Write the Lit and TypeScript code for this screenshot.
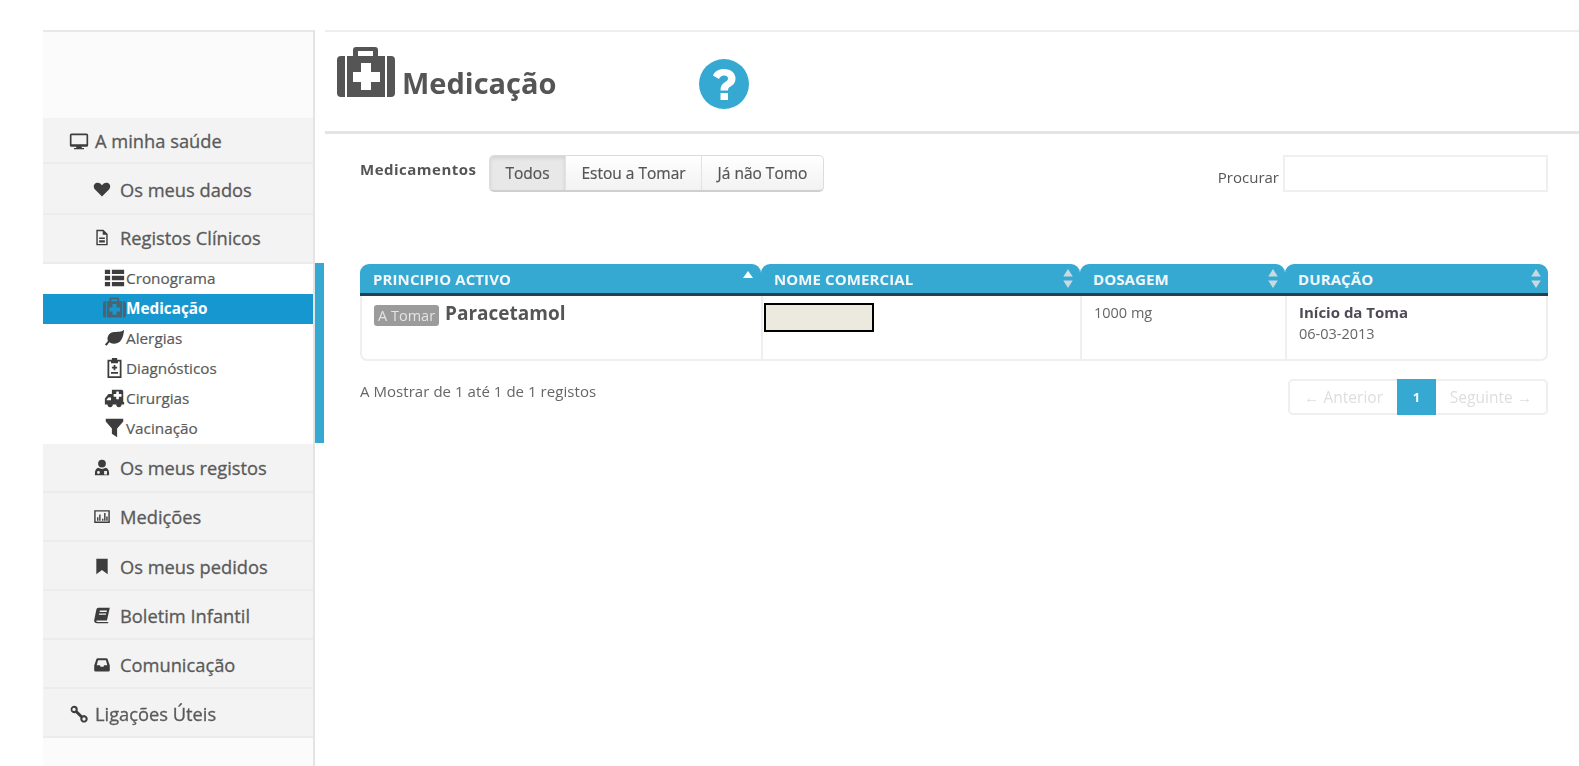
import { LitElement, html, css, svg } from "lit";
import { customElement } from "lit/decorators.js";

const ic = (body: unknown, vb = "0 0 24 24") =>
  html`<svg class="svg" viewBox=${vb} fill="currentColor" aria-hidden="true">${body}</svg>`;

const medPath = svg`<path fill-rule="evenodd" d="M16 9V3a3 3 0 0 1 3-3h19a3 3 0 0 1 3 3v6h7v41H10V9Zm5 0h15V4H21Zm3 7v9h-8v10h8v8h10v-8h9V25h-9v-9ZM4 9h4v41H4a4 4 0 0 1-4-4V13a4 4 0 0 1 4-4Zm46 0h4a4 4 0 0 1 4 4v33a4 4 0 0 1-4 4h-4Z"/>`;

const heart = svg`<path d="M12 22 2.500 12.500C-.5 9-.2 4.500 3 3c3-1.300 6.500-.5 9 3 2.500-3.500 6-4.300 9-3 3.200 1.500 3.500 6 .5 9.500Z"/>`;

const icons: Record<string, unknown> = {
  monitor: ic(svg`<path fill-rule="evenodd" d="M3 3h18a2 2 0 0 1 2 2v12a2 2 0 0 1-2 2h-6l.5 1.500H18V22H6v-1.500h2.500l.5-1.500H3a2 2 0 0 1-2-2V5a2 2 0 0 1 2-2Zm0 2v11h18V5Z"/>`),
  heart: ic(heart),
  file: ic(svg`<path fill-rule="evenodd" d="M4 1h10l6 6v16H4Zm2 2v18h12V8h-5V3Zm2 9h8v2H8Zm0 4h8v3H8Z"/>`),
  list: ic(svg`<path d="M1 3h6v5H1Zm8 0h14v5H9ZM1 10h6v5H1Zm8 0h14v5H9ZM1 17h6v5H1Zm8 0h14v5H9Z"/>`),
  med: ic(medPath, "0 0 58 50"),
  leaf: ic(svg`<path d="M23 3C22 13 19 19 11 19c-2 0-3.500-.5-5-1.500L3 21.500 1 20l3.500-4C3 12 5 7 10 6c5-1 10 0 13-3Z"/>`),
  clip: ic(svg`<path fill-rule="evenodd" d="M9 3V1h6v2h5v21H4V3Zm-3 2v17h12V5h-2v2H8V5Zm5 4h2v2h2v2h-2v2h-2v-2H9v-2h2Zm-3 8h8v2H8Z"/>`),
  amb: ic(svg`<path fill-rule="evenodd" d="M9 3h11a2 2 0 0 1 2 2v12h1v3h-3a3 3 0 0 1-6 0h-4a3 3 0 0 1-6 0H1v-7l4-5h4Zm5 2v3h-3v3h3v3h3v-3h3V8h-3V5Zm-9 7-2 2.500V15h5v-3Z"/>`),
  filter: ic(svg`<path d="M2 2h20v3l-7 8v10l-6-4v-6L2 5Z"/>`),
  user: ic(svg`<path fill-rule="evenodd" d="M12 1a5.500 5.500 0 0 1 0 11 5.500 5.500 0 0 1 0-11ZM7 12.500c1.500 1 3 1.500 5 1.500s3.500-.5 5-1.500c3 .5 5 3.500 5 7.500v3H2v-3c0-4 2-7 5-7.500ZM5 19a2 2 0 1 0 4 0 2 2 0 1 0-4 0Zm10-2v5h4v-5Z"/>`),
  chart: ic(svg`<path fill-rule="evenodd" d="M1 3h22v18H1Zm2 2v14h18V5Zm2 8h2v5H5Zm3-4h2v9H8Zm4 6h2v3h-2Zm3-8h2v11h-2Zm3 5h2v6h-2Z"/>`),
  bookmark: ic(svg`<path d="M4 1h16v22l-8-6-8 6Z"/>`),
  book: ic(svg`<path fill-rule="evenodd" d="M7 1h16l-4 18H5c-1 0-1.500 1-1 1.500S5 21 6 21h15l-.5 2H5c-3 0-4.500-2-4-4.500L4 4c.3-1.800 1.500-3 3-3Zm2 4-.5 2h10l.5-2Zm-1 4-.5 2h10l.5-2Z"/>`),
  inbox: ic(svg`<path fill-rule="evenodd" d="M6 3h12c1 0 1.700.5 2 1.500l3 9V20a2 2 0 0 1-2 2H3a2 2 0 0 1-2-2v-6.500l3-9C4.300 3.500 5 3 6 3Zm.5 3-2 7H9l1 2h4l1-2h4.500l-2-7Z"/>`),
  link: ic(svg`<path fill-rule="evenodd" d="M6 2a4.500 4.500 0 0 1 4.500 4.500c0 .5-.1 1-.3 1.500l5.800 5.800A4.500 4.500 0 1 1 13.500 18c0-.5.100-1 .3-1.500L8 10.700A4.500 4.500 0 1 1 6 2Zm0 2.500a2 2 0 1 0 0 4 2 2 0 0 0 0-4Zm12 11.500a2 2 0 1 0 0 4 2 2 0 0 0 0-4Z"/>`),
};

const subs = [
  ["list", "Cronograma"],
  ["med", "Medicação"],
  ["leaf", "Alergias"],
  ["clip", "Diagnósticos"],
  ["amb", "Cirurgias"],
  ["filter", "Vacinação"],
];

const sort = html`<svg class="sort" viewBox="0 0 10 20" fill="currentColor" aria-hidden="true"><path d="M5 0l5 8H0ZM5 20l5-8H0Z"/></svg>`;

@customElement("app-root")
export class AppRoot extends LitElement {
  static styles = css`
    :host {
      display: block;
      height: 766px;
      overflow: hidden;
      background: #fff;
      font-family: "Open Sans", "Noto Sans", sans-serif;
      color: #555;
    }
    * { box-sizing: border-box; }
    .page {
      display: flex;
      height: 766px;
      padding: 30px 0 0 43px;
      filter: blur(0.5px);
    }
    .side {
      width: 270px;
      flex: none;
      border-top: 2px solid #e8e8e8;
      background: #fbfbfb;
    }
    .brand { height: 86px; }
    .row {
      display: flex;
      align-items: center;
      gap: 8px;
      height: 49px;
      padding: 0 0 0 49px;
      background: #f3f3f3;
      border-bottom: 2px solid #ececec;
      font-size: 18.300px;
      color: #5a5a5a;
      -webkit-text-stroke: 0.3px #5a5a5a;
    }
    .row.top { padding-left: 25px; gap: 5px; }
    .row.first { height: 46px; padding-top: 1px; }
    .row.tall { height: 51px; padding-top: 1px; }
    .row.lift { padding-bottom: 2px; }
    .row.drop { padding-top: 2px; }
    .row .svg { width: 22px; height: 20px; color: #3d3d3d; flex: none; }
    .row.small .svg { width: 20px; height: 17px; }
    .sub { background: #fff; }
    .item {
      display: flex;
      align-items: center;
      height: 30px;
      padding: 0 0 3px 60px;
      font-size: 15.300px;
      color: #5a5a5a;
      -webkit-text-stroke: 0.2px #5a5a5a;
    }
    .item .svg { width: 23px; height: 21px; flex: none; color: #3d3d3d; }
    .item.on { background: #1797d0; color: #fff; font-weight: 700; -webkit-text-stroke: 0; }
    .item.on .svg { color: #4a6472; }
    .track {
      width: 12px;
      flex: none;
      padding-top: 233px;
      border-left: 2px solid #e4e4e4;
    }
    .thumb { width: 9px; height: 180px; background: #36a9d3; }
    .main { flex: 1; border-top: 2px solid #eee; min-width: 0; }
    .head {
      display: flex;
      align-items: center;
      height: 102px;
      padding-left: 12px;
      border-bottom: 3px solid #e4e4e4;
    }
    .title-ic { width: 58px; height: 50px; color: #555; margin-top: -20px; flex: none; }
    .head h1 {
      margin: 1px 0 0 7px;
      width: 297px;
      font-size: 29px;
      font-weight: 700;
      color: #555;
    }
    .help { width: 50px; height: 50px; flex: none; margin-top: 4px; }
    .body { padding: 21px 31px 0 35px; }
    .tools { display: flex; align-items: flex-start; }
    .lbl { width: 129px; font-size: 15px; letter-spacing: .5px; font-weight: 700; line-height: 28px; color: #555; }
    .group {
      display: flex;
      height: 37px;
      border: 1px solid #dcdcdc;
      border-bottom: 2px solid #cfcfcf;
      border-radius: 5px;
      overflow: hidden;
      background: linear-gradient(#fff, #f2f2f2);
      font-size: 15.500px;
      -webkit-text-stroke: 0.2px #555;
    }
    .group div {
      display: flex;
      align-items: center;
      justify-content: center;
      border-left: 1px solid #e2e2e2;
    }
    .group .b1 { width: 75px; background: #e8e8e8; border-left: 0; box-shadow: inset 0 2px 4px rgba(0,0,0,.1); }
    .group .b2 { width: 136px; }
    .group .b3 { width: 122px; }
    .search { margin-left: auto; display: flex; align-items: flex-start; gap: 4px; }
    .search label { font-size: 15px; margin-top: 12px; }
    .input { width: 265px; height: 37px; border: 2px solid #efefef; background: #fff; }
    .table { margin-top: 72px; }
    .thead { display: grid; grid-template-columns: 401px 319px 205px 263px; }
    .tbody { display: grid; grid-template-columns: 399px 319px 205px 1fr; }
    .th {
      display: flex;
      align-items: center;
      justify-content: space-between;
      height: 32px;
      padding: 0 7px 0 13px;
      background: #36a9d3;
      border-bottom: 3px solid #27404c;
      border-radius: 9px 9px 0 0;
      color: #f1f7fa;
      font-size: 15px;
      font-weight: 700;
      letter-spacing: .1px;
    }
    .sort { width: 10px; height: 19px; color: #c9d9df; flex: none; }
    .tri { width: 0; height: 0; border: 5px solid transparent; border-top: 0; border-bottom: 7px solid #fff; margin: -9px 1px 0 0; }
    .tbody {
      height: 65px;
      border: 2px solid #efefef;
      border-top: 0;
      border-radius: 0 0 7px 7px;
      font-size: 14.500px;
      color: #666;
    }
    .td { padding: 7px 12px 0; border-left: 2px solid #efefef; }
    .td:first-child { border-left: 0; padding-top: 5px; }
    .td.d { padding-top: 6px; }
    .drug { display: flex; align-items: flex-start; gap: 6px; }
    .badge {
      display: block;
      margin-top: 4px;
      padding: 0 4px;
      height: 21px;
      line-height: 21px;
      border-radius: 3px;
      background: #9b9b9b;
      color: #e4e4e4;
      font-size: 14.500px;
    }
    .name { font-size: 19px; font-weight: 700; color: #555; line-height: 24px; }
    .hidden { width: 110px; height: 29px; margin: 7px 0 0 -11px; background: #ece9df; border: 2px solid #000; }
    .td.n { padding-top: 0; }
    .strong { font-weight: 700; font-size: 15px; color: #4f4a55; line-height: 20px; }
    .date { margin-top: 2px; line-height: 20px; }
    .foot { display: flex; justify-content: space-between; margin-top: 18px; }
    .info { font-size: 15px; letter-spacing: .05px; color: #666; line-height: 22px; margin-top: 1px; }
    .pager {
      display: flex;
      height: 36px;
      border: 2px solid #efefef;
      border-radius: 5px;
      font-size: 15.500px;
      color: #dedede;
    }
    .pager div { display: flex; align-items: center; justify-content: center; }
    .pager .p { width: 107px; }
    .pager .c { width: 39px; margin: -2px 0; background: #36a9d3; color: #f2f8fb; font-size: 13px; font-weight: 700; }
    .pager .n { width: 110px; }
  `;

  render() {
    const row = (i: string, t: string, cls = "") =>
      html`<div class="row ${cls}">${icons[i]}<span>${t}</span></div>`;
    return html`<div class="page">
      <nav class="side">
        <div class="brand"></div>
        ${row("monitor", "A minha saúde", "top first")}
        ${row("heart", "Os meus dados", "tall small")}
        ${row("file", "Registos Clínicos", "small lift")}
        <div class="sub">
          ${subs.map(
            ([i, t]) =>
              html`<div class="item ${t === "Medicação" ? "on" : ""}">${icons[i]}<span>${t}</span></div>`
          )}
        </div>
        ${row("user", "Os meus registos", "small")}
        ${row("chart", "Medições", "small")}
        ${row("bookmark", "Os meus pedidos", "small drop")}
        ${row("book", "Boletim Infantil", "small drop")}
        ${row("inbox", "Comunicação", "small drop")}
        ${row("link", "Ligações Úteis", "top drop")}
      </nav>
      <div class="track"><div class="thumb"></div></div>
      <main class="main">
        <header class="head">
          <svg class="title-ic" viewBox="0 0 58 50" fill="currentColor">${medPath}</svg>
          <h1>Medicação</h1>
          <svg class="help" viewBox="0 0 50 50"><circle cx="25" cy="25" r="25" fill="#36a9d3"/><path fill="#fff" d="M25 10c7 0 11.500 4 11.500 9.500 0 4.500-2.500 6.500-5 8-2 1.200-2.500 2-2.500 4h-7.500c0-4 1-6 4-8 2-1.300 3.500-2.200 3.500-4 0-1.700-1.500-3-4-3-2.300 0-4 1.200-5 3.500l-6-3.500C15.500 12.500 19.500 10 25 10ZM21.500 34H29v7h-7.500Z"/></svg>
        </header>
        <div class="body">
          <div class="tools">
            <div class="lbl">Medicamentos</div>
            <div class="group"><div class="b1">Todos</div><div class="b2">Estou a Tomar</div><div class="b3">Já não Tomo</div></div>
            <div class="search"><label>Procurar</label><div class="input"></div></div>
          </div>
          <div class="table">
            <div class="thead">
              <div class="th">PRINCIPIO ACTIVO<i class="tri"></i></div>
              <div class="th">NOME COMERCIAL${sort}</div>
              <div class="th">DOSAGEM${sort}</div>
              <div class="th">DURAÇÃO${sort}</div>
            </div>
            <div class="tbody">
              <div class="td"><div class="drug"><span class="badge">A Tomar</span><span class="name">Paracetamol</span></div></div>
              <div class="td n"><div class="hidden"></div></div>
              <div class="td">1000 mg</div>
              <div class="td d"><div class="strong">Início da Toma</div><div class="date">06-03-2013</div></div>
            </div>
          </div>
          <div class="foot">
            <div class="info">A Mostrar de 1 até 1 de 1 registos</div>
            <div class="pager"><div class="p">← Anterior</div><div class="c">1</div><div class="n">Seguinte →</div></div>
          </div>
        </div>
      </main>
    </div>`;
  }
}
